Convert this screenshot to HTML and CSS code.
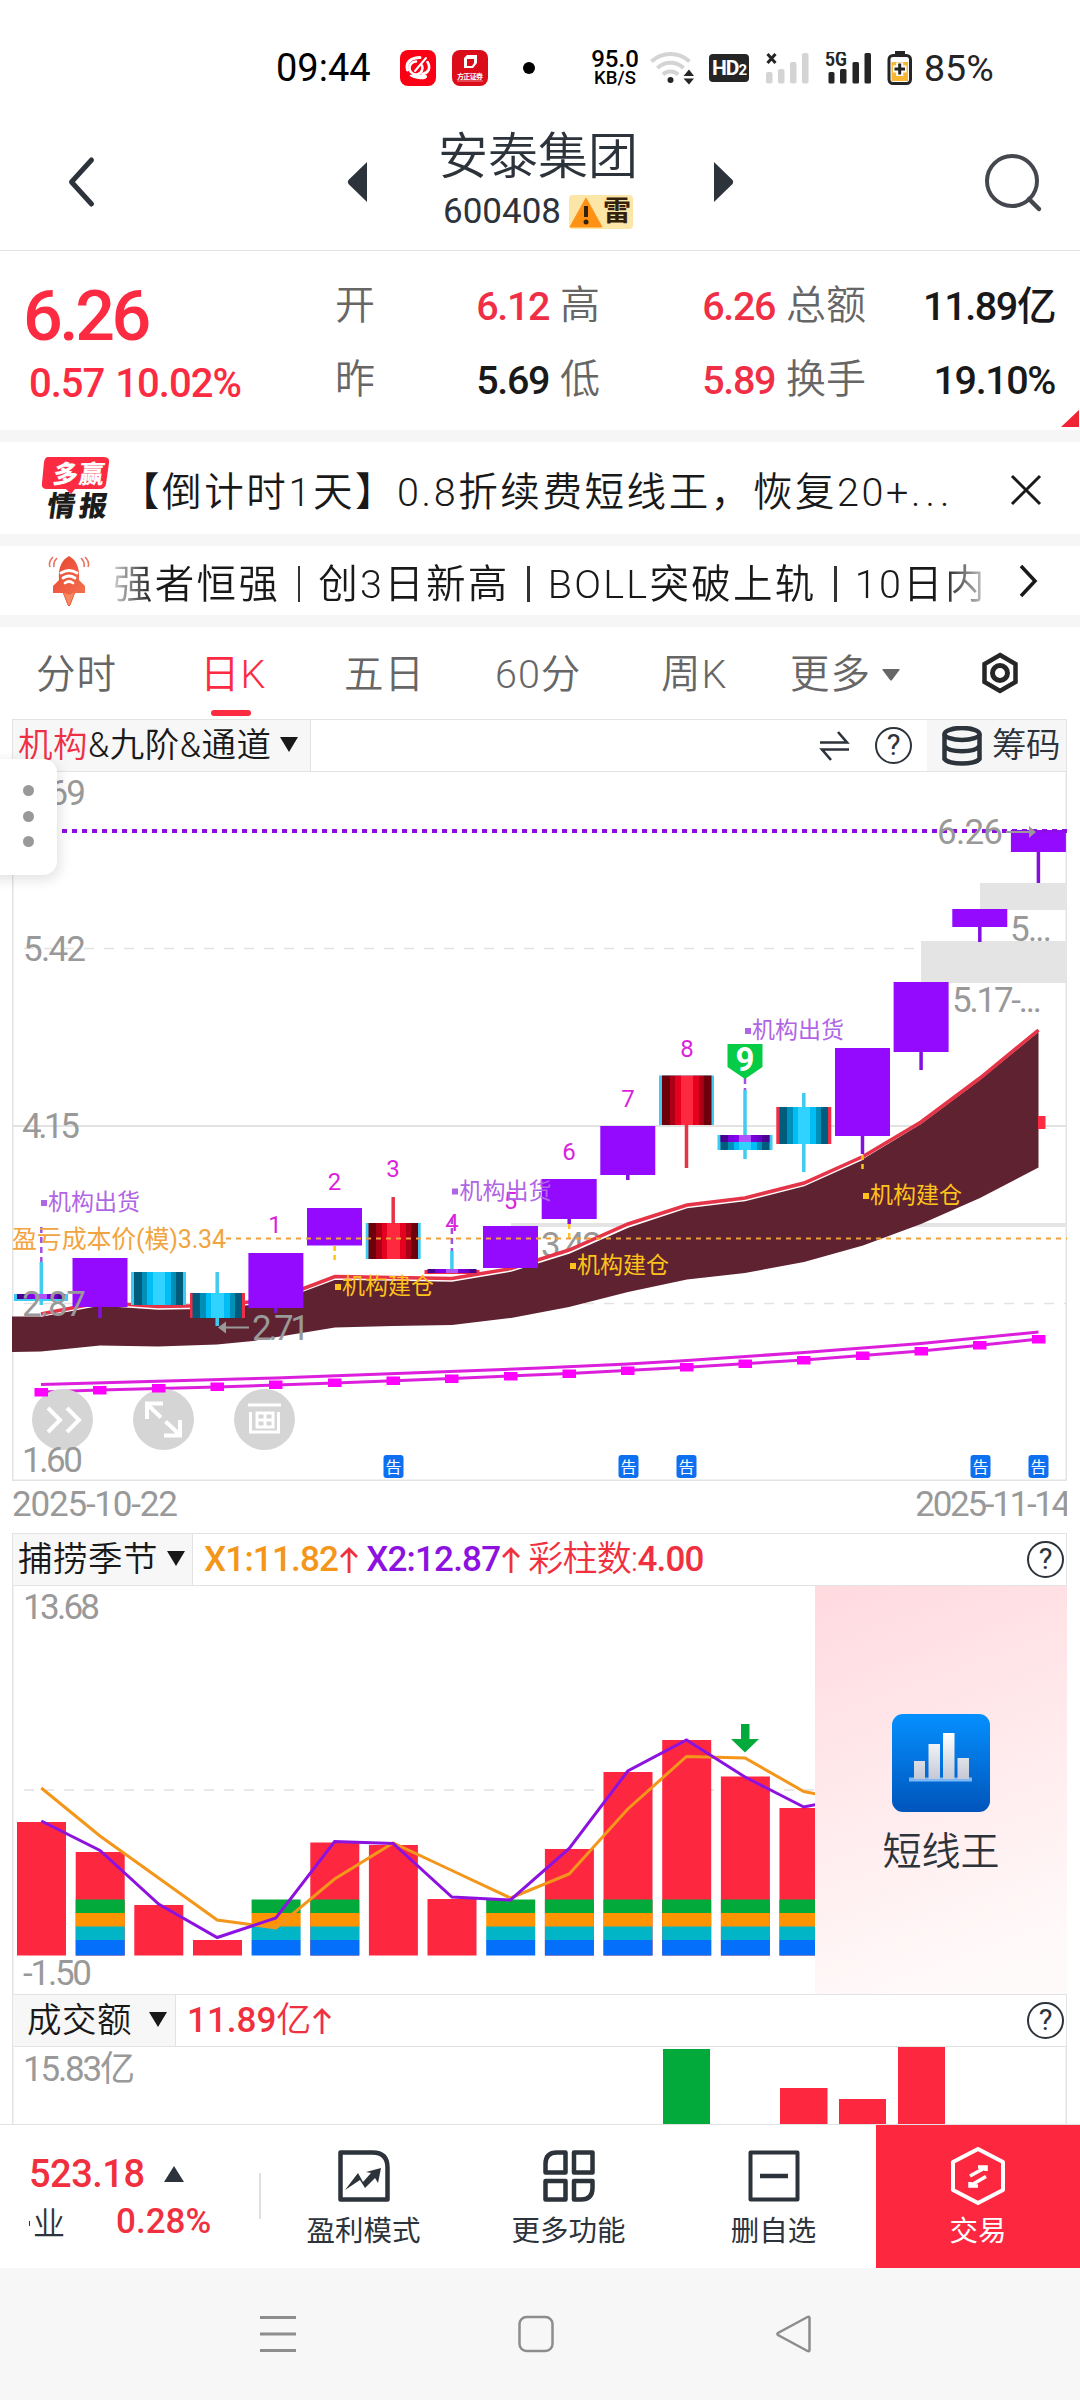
FILE: index.html
```html
<!DOCTYPE html>
<html lang="zh-CN">
<head>
<meta charset="utf-8">
<title>安泰集团 600408</title>
<link rel="stylesheet" href="styles.css">
</head>
<body>
<header class="status">
  <span class="clock">09:44</span>
  <svg class="app-a" width="36" height="36" viewBox="0 0 36 36"><rect width="36" height="36" rx="8" fill="#fb0015"/><g fill="none" stroke="#fff" stroke-linecap="round"><path d="M7.500 20C5 12 12 7.500 20 7.500" stroke-width="3"/><path d="M22 15.500a6.500 6.500 0 1 1-6-4" stroke-width="2.600"/><path d="M27.500 12c3.500 6 1 11-5 12" stroke-width="2.600"/><path d="M10 25.500c5 1 8 0 12-.5 7 0 5 4-2 3.500-5 0-7-1-10-3z" fill="#fff" stroke-width="1.500"/><path d="M15 21L26 8" stroke-width="2"/></g></svg>
  <svg class="app-b" width="36" height="36" viewBox="0 0 36 36"><rect width="36" height="36" rx="8" fill="#dc0d1b"/><path d="M12 8l3-3h10v8l-4 5h-9zM15 9v7h5l2-3V9z" fill="#fff" fill-rule="evenodd"/><text x="5" y="29" font-size="7" font-weight="700" fill="#fff" textLength="26">方正证券</text><path d="M5 31h26" stroke="#fff" stroke-width=".8" opacity=".6"/></svg>
  <i class="dot"></i>
  <span class="rate"><b>95.0</b><b class="unit">KB/S</b></span>
  <svg class="wifi" width="44" height="36" viewBox="0 0 44 36"><g fill="none" stroke="#d4d4d4" stroke-width="4"><path d="M1.500 11.500a28 28 0 0 1 38 0"/><path d="M7.500 18a19 19 0 0 1 26 0"/><path d="M13 24.500a11 11 0 0 1 15 0"/></g><circle cx="20.500" cy="30" r="3" fill="#252525"/><path d="M33.500 26l5.500-6.500 5 6.500zM33.500 28.500h10.500l-5 6z" fill="#252525"/></svg>
  <span class="hd">HD<small>2</small></span>
  <svg class="sig" width="44" height="32" viewBox="0 0 44 32"><path d="M1.500 2l8 9m0-9l-8 9" stroke="#252525" stroke-width="3"/><g fill="#d4d4d4"><rect y="20" width="6.500" height="11.500" rx="2"/><rect x="12" y="17" width="6.500" height="14.500" rx="2"/><rect x="24" y="10" width="6.500" height="21.500" rx="2"/><rect x="36" y="1" width="6.500" height="30.500" rx="2"/></g></svg>
  <svg class="sig2" width="47" height="32" viewBox="0 0 47 32"><text x="0" y="14" font-size="20" font-weight="700" fill="#252525" textLength="22" lengthAdjust="spacingAndGlyphs">5G</text><g fill="#252525"><rect x="3.500" y="20" width="6" height="11.500" rx="1.500"/><rect x="15" y="17" width="6.500" height="14.500" rx="1.500"/><rect x="27.500" y="10" width="6.500" height="21.500" rx="1.500"/><rect x="39.500" y="1" width="6.500" height="30.500" rx="1.500"/></g></svg>
  <svg class="batt" width="26" height="36" viewBox="0 0 26 36"><path d="M8 1h10v5H8z" fill="#252525"/><rect x="2" y="5.500" width="21.500" height="28" rx="4" fill="#fff" stroke="#252525" stroke-width="3"/><path d="M4.500 12h16.500v19H4.500z" fill="#f8b733"/><path d="M6 19h13.500M12.700 12.500v13.500" stroke="#fff" stroke-width="7"/><path d="M7.500 19h10.500M12.700 13.500v11" stroke="#252525" stroke-width="3"/></svg>
  <span class="pct">85%</span>
</header>

<section class="title">
  <svg class="back" width="30" height="52" viewBox="0 0 30 52"><path d="M25.500 4L5.500 26l20 22" fill="none" stroke="#2d333b" stroke-width="5" stroke-linecap="round" stroke-linejoin="round"/></svg>
  <svg class="prev" width="20" height="42" viewBox="0 0 20 42"><path d="M20 1v40L1.500 23q-1.500-2 0-4z" fill="#2d333b"/></svg>
  <div class="name"><h1>安泰集团</h1><p>600408 <span class="risk"><svg width="34" height="32" viewBox="0 0 34 32"><path d="M17 2L33 31H1z" fill="#ff9214" stroke="#ff9214" stroke-linejoin="round"/><path d="M17 10v11" stroke="#33210c" stroke-width="4"/><circle cx="17" cy="26" r="2.500" fill="#33210c"/></svg>雷</span></p></div>
  <svg class="next" width="20" height="42" viewBox="0 0 20 42"><path d="M0 1v40l18.500-18q1.500-2 0-4z" fill="#2d333b"/></svg>
  <svg class="search" width="60" height="62" viewBox="0 0 60 62"><circle cx="28" cy="29" r="25" fill="none" stroke="#45474f" stroke-width="4"/><path d="M45 47l10 10" stroke="#45474f" stroke-width="4.500" stroke-linecap="round"/></svg>
</section>

<section class="quote">
  <div class="last"><div class="price">6.26</div><div class="chg"><span>0.57</span><span>10.02%</span></div></div>
  <div class="stats">
    <span class="k">开</span><span class="v up">6.12</span><span class="k">高</span><span class="v up">6.26</span><span class="k">总额</span><span class="v">11.89亿</span>
    <span class="k">昨</span><span class="v">5.69</span><span class="k">低</span><span class="v up">5.89</span><span class="k">换手</span><span class="v">19.10%</span>
  </div>
  <i class="corner"></i>
</section>

<section class="promo">
  <svg width="72" height="64" viewBox="0 0 72 64"><path d="M9 1h56q6 0 5 6l-3 21q-1 5-6 5H36l-4 5-5-5H8q-6 0-5-6L5 6q1-5 4-5z" fill="#fc2b42"/><g font-weight="900"><text transform="translate(13 27) skewX(-8)" font-size="25" fill="#fff" textLength="51">多赢</text><text transform="translate(7 60) skewX(-8)" font-size="28" fill="#1c1c1c" textLength="60">情报</text></g></svg>
  <p>【倒计时1天】0.8折续费短线王，恢复20+<span>...</span></p>
  <svg class="close" width="32" height="32" viewBox="0 0 32 32"><path d="M2 2l28 28M30 2L2 30" stroke="#191919" stroke-width="3"/></svg>
</section>

<section class="ticker">
  <svg width="42" height="52" viewBox="0 0 42 52"><defs><linearGradient id="rk" x1="0" y1="0" x2="1" y2="1"><stop offset="0" stop-color="#e8452f"/><stop offset="1" stop-color="#f4704f"/></linearGradient></defs><path d="M15 37h12l-5 13q-1 2-2 0z" fill="#f58a62" stroke="#ea5b38"/><path d="M21 1c7 4 11 11 10 24l6 6v7H25q-4 3-8 0H5v-7l6-6C10 12 14 5 21 1z" fill="url(#rk)"/><g fill="none" stroke="#fff" stroke-width="2.800" stroke-linecap="round"><path d="M13 18q8-5 16 0M15 23q6-4 12 0M17 28q4-3 8 0"/></g><g fill="none" stroke="#e87561" stroke-width="1.600"><path d="M9 3Q5 7 6 12M5 2Q0 7 2 12M33 3q4 4 3 9M37 2q5 5 3 10"/></g></svg>
  <p>强者恒强<i></i>创3日新高<i></i>BOLL突破上轨<i></i>10日内</p>
  <svg width="20" height="34" viewBox="0 0 20 34"><path d="M2 2l14 15L2 32" fill="none" stroke="#191919" stroke-width="3.500"/></svg>
</section>

<nav class="tabs">
  <span>分时</span><span class="on">日K</span><span>五日</span><span>60分</span><span>周K</span><span class="more">更多<svg width="18" height="12" viewBox="0 0 18 12"><path d="M1 0h16q1 0 .5 1L10 11q-1 1-2 0L.5 1Q0 0 1 0z" fill="#666"/></svg></span>
  <svg class="hex" width="38" height="42" viewBox="0 0 38 42"><path d="M19 3l15.500 9v18L19 39 3.500 30V12z" fill="none" stroke="#262626" stroke-width="4.500"/><circle cx="19" cy="21" r="7.500" fill="none" stroke="#262626" stroke-width="5"/></svg>
</nav>

<main class="charts">
  <div class="head">
    <span class="sel"><em>机构</em>&amp;九阶&amp;通道<i class="tri"></i></span>
    <svg class="swap" width="34" height="34" viewBox="0 0 34 34"><path d="M2 13.500h27L20 3M31 20.500H4L13 31" fill="none" stroke="#2d333b" stroke-width="2.600"/></svg>
    <span class="help">?</span>
    <span class="chip"><svg width="40" height="40" viewBox="0 0 40 40"><g fill="none" stroke="#2d333b" stroke-width="4.500"><ellipse cx="20" cy="8" rx="17.500" ry="6"/><path d="M2.500 8v25c5 6 30 6 35 0V8M2.500 20c5 7 30 7 35 0"/></g></svg>筹码</span>
  </div>

  <svg class="kline" width="1055" height="709" viewBox="12 772 1055 709">
    <defs>
      <linearGradient id="cy"><stop offset=".05" stop-color="#005c7d"/><stop offset=".16" stop-color="#005c7d"/><stop offset=".16" stop-color="#008fb8"/><stop offset=".27" stop-color="#008fb8"/><stop offset=".27" stop-color="#00bdf5"/><stop offset=".38" stop-color="#00bdf5"/><stop offset=".38" stop-color="#30d2ff"/><stop offset=".63" stop-color="#30d2ff"/><stop offset=".63" stop-color="#00bdf5"/><stop offset=".75" stop-color="#00bdf5"/><stop offset=".75" stop-color="#008fb8"/><stop offset=".85" stop-color="#008fb8"/><stop offset=".85" stop-color="#005c7d"/></linearGradient>
      <linearGradient id="rd"><stop offset=".16" stop-color="#6e000c"/><stop offset=".16" stop-color="#aa0016"/><stop offset=".27" stop-color="#aa0016"/><stop offset=".27" stop-color="#e4001e"/><stop offset=".38" stop-color="#e4001e"/><stop offset=".38" stop-color="#ff293f"/><stop offset=".63" stop-color="#ff293f"/><stop offset=".63" stop-color="#e4001e"/><stop offset=".75" stop-color="#e4001e"/><stop offset=".75" stop-color="#aa0016"/><stop offset=".85" stop-color="#aa0016"/><stop offset=".85" stop-color="#6e000c"/></linearGradient>
      <linearGradient id="pu"><stop offset=".16" stop-color="#4a0090"/><stop offset=".16" stop-color="#7300d6"/><stop offset=".38" stop-color="#8b00f5"/><stop offset=".38" stop-color="#b053ff"/><stop offset=".63" stop-color="#b053ff"/><stop offset=".63" stop-color="#7e00e2"/><stop offset=".85" stop-color="#6500c0"/><stop offset=".85" stop-color="#4a0090"/></linearGradient>
    </defs>
    <path d="M12.700 772V1480.300H1066.300V772" fill="none" stroke="#e3e3e3" stroke-width="1.500"/>
    <g stroke="#e2e2e2" fill="none"><path d="M24 948.500H920" stroke-width="1.500" stroke-dasharray="10 10"/><path d="M12 1126H1067" stroke-width="2"/><path d="M24 1303.500H1067" stroke-width="1.500" stroke-dasharray="10 10"/></g>
    <g fill="#e4e4e4"><path d="M980 883h87v27h-87zM921 941h146v42H921zM511 1223h556v4H511z"/></g>
    <g class="axis"><text x="541" y="1257" textLength="61">3.42</text></g>
    <path fill="#5e2231" d="M12 1316.500H41L100 1305 158 1309 217 1308 276 1301 335 1279 393 1280 452 1281 511 1271 569 1253 628 1227 687 1207 745 1200 804 1185 863 1159 921 1124 980 1080 1038.500 1032V1167.500L980 1198 921 1224 863 1245.500 804 1262 745 1273 687 1279.500 628 1292 569 1307 511 1318 452 1325 393 1326 335 1327.500 253 1341 217 1344.500 158 1346.500 100 1345.500 41 1351.500 12 1352z"/>
    <path fill="none" stroke="#fff" stroke-width="1.500" d="M41 1316L100 1305 158 1309 217 1308 276 1301 335 1279 393 1280 452 1281 511 1271 569 1253 628 1227 687 1207.500 745 1200.500 804 1185.500 863 1159"/>
    <path fill="none" stroke="#e53347" stroke-width="3.500" d="M41 1314L100 1302.500 158 1306.500 217 1305.500 276 1299 335 1276.500 393 1277.500 452 1278.500 511 1268.500 569 1250 628 1224 687 1205 745 1198 804 1183 863 1156.500 921 1122 980 1078 1038.500 1030"/>
    <path d="M1038 1116h7.500v13h-7.500z" fill="#fc2b42"/>
    <g stroke-width="3.500" fill="none">
      <path stroke="#a34fe0" stroke-width="2.500" stroke-dasharray="6 4" d="M41.300 1227v35M451.900 1218v33M745 1078v12"/>
      <path stroke="#3fcbf2" d="M41.300 1262v43M217.200 1272v54M451.900 1251v18M745 1090v69M803.800 1093v79"/>
      <path stroke="#8410e0" d="M100 1307v11M275.900 1308v5M569.200 1219v5M627.800 1175v5M862.500 1136v18M921.100 1052v18M979.800 927v15M1038.400 852v31"/>
      <path stroke="#e53347" d="M393.200 1197v27M686.500 1125v43"/>
      <path stroke="#ffc21a" stroke-width="2.500" stroke-dasharray="5 4" d="M334.600 1246v14M569.200 1224v15M862.500 1155v15"/>
    </g>
    <path fill="#930aff" d="M72.500 1258h55v49h-55zM248.400 1253h55v55h-55zM307 1208h55v37.500h-55zM483 1226h55v42h-55zM541.700 1179h55v40h-55zM600.300 1126h55v49h-55zM835 1048h55v88h-55zM893.600 982h55v70h-55zM952.300 909h55v18h-55zM1010.900 830h55v22h-55z"/>
    <g fill="#3fcbf2"><path d="M14 1294h54v7H14zM131 1272h55v33h-55zM365.700 1223h55v36h-55zM659 1075.500h55v49.500h-55zM717.500 1135h55v15h-55z"/></g>
    <g fill="#f02f46"><path d="M190 1293h55v25h-55zM424.500 1270h55v4h-55zM776.300 1107h55v37h-55z"/></g>
    <g fill="url(#cy)"><rect x="134" y="1272" width="49" height="33"/><rect x="192.500" y="1293" width="49.500" height="25"/><rect x="720.500" y="1135" width="49" height="15"/><rect x="779.500" y="1107" width="48.500" height="37"/></g>
    <g fill="url(#rd)"><rect x="368.500" y="1223" width="49.500" height="36"/><rect x="662" y="1075.500" width="49.500" height="49.500"/></g>
    <g fill="url(#pu)"><rect x="17" y="1294" width="48" height="5"/><rect x="427.500" y="1269" width="49" height="4"/><rect x="720.500" y="1135" width="49" height="7"/></g>
    <path stroke="#8b10e0" stroke-width="4" stroke-dasharray="5 5" d="M12 831H1067"/>
    <path stroke="#eea03c" stroke-width="2" stroke-dasharray="5 5" d="M226 1238.600H1067"/>
    <g fill="none" stroke="#dc1fdc" stroke-width="3"><path d="M41 1384.500L276 1378 540 1368 628 1364 687 1360.500 804 1352.500 921 1343.500 1038.500 1332"/><path d="M41 1392L100 1390 217 1387 335 1383 452 1378.500 569 1373.500 687 1367.300 804 1360 921 1351 980 1345.300 1038.500 1339"/></g>
    <g fill="#d5d5d5"><circle cx="62.500" cy="1419.500" r="30.500"/><circle cx="163.500" cy="1419.500" r="30.500"/><circle cx="264.500" cy="1419.500" r="30.500"/></g>
    <path fill="#ff00ff" d="M34.500 1388h13.500v8.500H34.500zM93 1386h13.500v8.500H93zM152 1384h13.500v8.500H152zM210.500 1382.500h13.500v8.500h-13.500zM269 1380.500h13.500v8.500h-13.500zM328 1378.500h13.500v8.500H328zM386.500 1376.500h13.500v8.500h-13.500zM445 1374.500h13.500v8.500H445zM504 1372h13.500v8.500H504zM562.500 1369.500h13.500v8.500h-13.500zM621 1366.500h13.500v8.500H621zM680 1363h13.500v8.500H680zM738.500 1359.500h13.500v8.500h-13.500zM797 1356h13.500v8.500H797zM856 1351.500h13.500v8.500H856zM914.500 1347h13.500v8.500h-13.500zM973 1341h13.500v8.500H973zM1032 1335h13.500v8.500H1032z"/>
    <g fill="none" stroke="#fff" stroke-width="4"><path d="M48 1408l12 12-12 12M67 1408l12 12-12 12"/><path d="M147 1419v-15.500h16M148 1405l13 12.500M180 1420v15.500h-16M179 1434l-13.500-12.500"/><path d="M248 1405h33M250.500 1412v21M278.500 1412v21M249 1432h31M257 1413h16v14h-16zM265 1413v14M257 1420h16" stroke-width="3"/></g>
    <g class="axis">
      <text x="23" y="805" textLength="63">6.69</text><text x="23" y="961" textLength="63">5.42</text><text x="22" y="1138" textLength="58">4.15</text><text x="22" y="1316" textLength="64">2.87</text><text x="22" y="1472" textLength="61">1.60</text>
      <text x="937" y="844" textLength="66">6.26</text><text x="1010" y="941" textLength="42">5...</text><text x="952" y="1012" textLength="90">5.17-...</text><text x="252" y="1340" textLength="58">2.71</text>
    </g>
    <path d="M1006 832h26M249 1327.500h-28" stroke="#999" stroke-width="2"/><path d="M1036 832l-7-6v12zM218 1327.500l8-6v12z" fill="#999"/>
    <g class="cnt"><text x="275" y="1233">1</text><text x="334.500" y="1190">2</text><text x="393" y="1177">3</text><text x="452" y="1231">4</text><text x="510.500" y="1209">5</text><text x="569" y="1160">6</text><text x="628" y="1107">7</text><text x="687" y="1057">8</text></g>
    <g class="out"><path d="M41 1200h6v6h-6zM452 1188.500h6v6h-6zM745 1028h6v6h-6z"/><text x="48" y="1210">机构出货</text><text x="459.500" y="1199">机构出货</text><text x="752" y="1038">机构出货</text></g>
    <g class="in"><path d="M335 1284h6v6h-6zM570 1263h6v6h-6zM863 1193h6v6h-6z"/><text x="342" y="1294">机构建仓</text><text x="577" y="1273">机构建仓</text><text x="870" y="1203">机构建仓</text></g>
    <text x="12" y="1248" class="cost" textLength="214">盈亏成本价(模)3.34</text>
    <path d="M727.500 1044h35v23L745 1079l-17.500-12z" fill="#05cb45"/><text x="745" y="1071" font-size="33" font-weight="700" fill="#fff" text-anchor="middle">9</text>
    <g fill="#0e70f1"><rect x="383.500" y="1455" width="20" height="23" rx="3"/><rect x="618.500" y="1455" width="20" height="23" rx="3"/><rect x="676.500" y="1455" width="20" height="23" rx="3"/><rect x="970.500" y="1455" width="20" height="23" rx="3"/><rect x="1028.500" y="1455" width="20" height="23" rx="3"/></g>
    <g class="note"><text x="393.500" y="1472.500">告</text><text x="628.500" y="1472.500">告</text><text x="686.500" y="1472.500">告</text><text x="980.500" y="1472.500">告</text><text x="1038.500" y="1472.500">告</text></g>
  </svg>
  <div class="dates"><span>2025-10-22</span><span class="to">2025-11-14</span></div>

  <div class="head">
    <span class="sel two">捕捞季节<i class="tri"></i></span>
    <span class="vals"><b class="or">X1:11.82</b><svg class="arr" width="18" height="26" viewBox="0 0 18 26"><path d="M9 26V2M1 10l8-8 8 8" fill="none" stroke="#f0303f" stroke-width="2.800"/></svg><b class="pp">X2:12.87</b><svg class="arr" width="18" height="26" viewBox="0 0 18 26"><path d="M9 26V2M1 10l8-8 8 8" fill="none" stroke="#f0303f" stroke-width="2.800"/></svg><b class="rr"><s>彩柱数:</s>4.00</b></span>
    <span class="help">?</span>
  </div>
  <div class="season">
    <svg width="803" height="408" viewBox="12 1586 803 408">
      <path d="M12.700 1586v408" stroke="#e3e3e3" stroke-width="1.500"/>
      <path stroke="#e8e8e8" stroke-width="2" stroke-dasharray="10 10" d="M24 1790H815"/>
      <path fill="#fd2840" d="M17 1822h49v133.500H17zM75.700 1852h49v103.500h-49zM134.300 1905h49v50.500h-49zM193 1940h49v15.500h-49zM310.300 1842.500h49v113h-49zM368.900 1845h49v110.500h-49zM427.500 1899h49v56.500h-49zM544.900 1849h49v106.500h-49zM603.500 1772h49v183.500h-49zM662.200 1740h49v215.500h-49zM720.900 1776.500h49v179h-49zM779.500 1808h49v147.500h-49z"/>
      <path fill="#02aa3c" d="M75.700 1899.500h49v14h-49zM251.600 1899.500h49v14h-49zM310.300 1899.500h49v14h-49zM486.200 1899.500h49v14h-49zM544.900 1899.500h49v14h-49zM603.500 1899.500h49v14h-49zM662.200 1899.500h49v14h-49zM720.900 1899.500h49v14h-49zM779.500 1899.500h49v14h-49z"/>
      <path fill="#ff9300" d="M75.700 1913h49v14h-49zM251.600 1913h49v14h-49zM310.300 1913h49v14h-49zM486.200 1913h49v14h-49zM544.900 1913h49v14h-49zM603.500 1913h49v14h-49zM662.200 1913h49v14h-49zM720.900 1913h49v14h-49zM779.500 1913h49v14h-49z"/>
      <path fill="#02b5c6" d="M75.700 1926.500h49v14h-49zM251.600 1926.500h49v14h-49zM310.300 1926.500h49v14h-49zM486.200 1926.500h49v14h-49zM544.900 1926.500h49v14h-49zM603.500 1926.500h49v14h-49zM662.200 1926.500h49v14h-49zM720.900 1926.500h49v14h-49zM779.500 1926.500h49v14h-49z"/>
      <path fill="#046ffb" d="M75.700 1940h49v15.500h-49zM251.600 1940h49v15.500h-49zM310.300 1940h49v15.500h-49zM486.200 1940h49v15.500h-49zM544.900 1940h49v15.500h-49zM603.500 1940h49v15.500h-49zM662.200 1940h49v15.500h-49zM720.900 1940h49v15.500h-49zM779.500 1940h49v15.500h-49z"/>
      <g fill="none" stroke-width="3"><path stroke="#f3961a" d="M41.300 1788L100 1836 158.600 1878 217.200 1920 275.900 1928 334.600 1879 393.200 1843 451.900 1870.500 510.500 1898 569.200 1874 627.800 1809 686.500 1756.500 745 1758 803.800 1791.500 816 1794"/><path stroke="#8d12e0" d="M41.300 1821L100 1850.500 158.600 1904 217.200 1937.500 275.900 1918 334.600 1841.500 393.200 1843.500 451.900 1897 510.500 1900 569.200 1848.500 627.800 1771 686.500 1740 745 1777 803.800 1807 816 1804.500"/></g>
      <path fill="#02aa3c" d="M741 1724h8.500v15h9.500l-14 13.500L731 1739h10z"/>
      <g class="axis"><text x="23" y="1619" textLength="77">13.68</text><text x="23" y="1985" textLength="69">-1.50</text></g>
    </svg>
    <aside>
      <svg width="98" height="98" viewBox="0 0 98 98"><defs><linearGradient id="bl" x2="0" y2="1"><stop offset="0" stop-color="#0590ff"/><stop offset="1" stop-color="#0055bb"/></linearGradient><linearGradient id="wh" x2="0" y2="1"><stop offset="0" stop-color="#fff"/><stop offset="1" stop-color="#c5c9d6"/></linearGradient></defs><rect width="98" height="98" rx="11" fill="url(#bl)"/><path d="M17 63.500h63v4H17z" fill="#7fb9f5"/><path d="M22 47h11v18H22zM36.500 30h11.500v35H36.500zM51 19h11.500v46H51zM65.500 44H77v21H65.500z" fill="url(#wh)"/></svg>
      <span>短线王</span>
    </aside>
  </div>

  <div class="head">
    <span class="sel three">成交额<i class="tri"></i></span>
    <span class="vals"><b class="rr amt">11.89<s>亿</s></b><svg class="arr" width="18" height="26" viewBox="0 0 18 26"><path d="M9 26V2M1 10l8-8 8 8" fill="none" stroke="#f0303f" stroke-width="2.800"/></svg></span>
    <span class="help">?</span>
  </div>
  <svg class="vol" width="1055" height="77" viewBox="12 2047 1055 77"><path d="M12.700 2047v78M1066.300 2047v78" stroke="#e3e3e3" stroke-width="1.500"/><path fill="#02aa3c" d="M663 2049h47v76h-47z"/><path fill="#fd2840" d="M780 2088h47.500v37H780zM839 2099h47v26h-47zM898 2047h47v78h-47z"/><g class="axis"><text x="23" y="2081" textLength="112">15.83亿</text></g></svg>
</main>

<footer class="bar">
  <div class="index"><div class="i1">523.18<svg width="20" height="16" viewBox="0 0 20 16"><path d="M10 0l10 16H0z" fill="#2d333b"/></svg></div><div class="i2"><span class="dotcut">业</span><b>0.28%</b></div></div>
  <i class="div"></i>
  <div class="act"><svg width="52" height="52" viewBox="0 0 52 52"><path d="M2.500 2.500h32q15 0 15 15v32h-47z" fill="none" stroke="#2d333b" stroke-width="4.500" stroke-linejoin="round"/><path d="M7 40l13-17 5 9 8-9-5-1 15-4-3 15-3-5-10 10-5-8z" fill="#2d333b"/></svg><span>盈利模式</span></div>
  <div class="act"><svg width="52" height="52" viewBox="0 0 52 52"><g fill="none" stroke="#2d333b" stroke-width="4.500" stroke-linejoin="round"><path d="M14 2.500h8.500v20h-20V14q0-11.500 11.500-11.500zM31 2.500h18.500v20H31zM2.500 31h20v18.500h-20zM31 31h18.500v7q0 11.500-11.500 11.500h-7z"/></g></svg><span>更多功能</span></div>
  <div class="act"><svg width="52" height="52" viewBox="0 0 52 52"><rect x="2.500" y="2.500" width="47" height="47" fill="none" stroke="#2d333b" stroke-width="4" stroke-linejoin="round"/><path d="M12 26h28" stroke="#2d333b" stroke-width="4.500"/></svg><span>删自选</span></div>
  <div class="act trade"><svg width="56" height="60" viewBox="0 0 56 60"><path d="M28 3l25 13v28L28 57 3 44V16z" fill="none" stroke="#fff" stroke-width="4" stroke-linejoin="round"/><path d="M20 30L35.500 21.500M28 21h8v4M36 30.500L20.500 39.500M28 40h-8v-4" fill="none" stroke="#fff" stroke-width="3.500"/></svg><span>交易</span></div>
</footer>

<nav class="sys">
  <svg width="36" height="38" viewBox="0 0 36 38"><path d="M0 2.500h36M0 19h36M0 35.500h36" stroke="#8d8d8d" stroke-width="3"/></svg>
  <svg width="36" height="38" viewBox="0 0 36 38"><rect x="1.500" y="2" width="33" height="34" rx="7" fill="none" stroke="#8d8d8d" stroke-width="2.500"/></svg>
  <svg width="36" height="38" viewBox="0 0 36 38"><path d="M33.500 3v32q0 2-2 1L2 20q-1-1 0-2L31.500 2q2-1 2 1z" fill="none" stroke="#8d8d8d" stroke-width="2.500"/></svg>
</nav>

<div class="drawer"><i></i><i></i><i></i></div>
</body>
</html>
```
FILE: styles.css
```css
* { box-sizing: border-box; margin: 0; padding: 0; }
body { width: 1080px; height: 2400px; overflow: hidden; position: relative; background: #fff; color: #191919; font-family: Roboto, "Noto Sans CJK SC", sans-serif; display: flex; flex-direction: column; }
svg { display: block; flex: none; }
svg text { font-family: Roboto, "Noto Sans CJK SC", sans-serif; }
i, em { font-style: normal; }
span, b, p { white-space: nowrap; }

.status { height: 118px; padding: 18px 0 0 276px; display: flex; align-items: center; flex: none; }
.clock { width: 124px; font-size: 38px; color: #000; }
.app-b { margin-left: 16px; }
.dot { width: 12px; height: 12px; border-radius: 50%; background: #000; margin-left: 35px; }
.rate { width: 50px; margin-left: 55px; display: flex; flex-direction: column; align-items: center; color: #000; font-size: 24px; line-height: 20px; gap: 1px; }
.rate b { font-weight: 500; }
.rate .unit { font-size: 18.500px; line-height: 17px; }
.wifi { margin-left: 10px; }
.hd { width: 40px; height: 28px; margin-left: 15px; border-radius: 4px; background: #252525; color: #fff; font-size: 21px; font-weight: 700; line-height: 29px; text-align: center; letter-spacing: -1px; }
.hd small { font-size: 15px; }
.sig { margin-left: 17px; }
.sig2 { margin-left: 15px; }
.batt { margin-left: 15px; }
.pct { margin-left: 11px; font-size: 37.500px; color: #252525; }

.title { height: 133px; border-bottom: 1.500px solid #e3e3e3; display: grid; grid-template-columns: 281px 20px 347px 269px 60px; padding-left: 66px; align-items: center; flex: none; }
.back, .prev, .next { margin-top: -4px; }
.search { margin-top: -2px; margin-left: 1px; }
.name { display: flex; flex-direction: column; align-items: center; color: #2d333b; padding-right: 5px; margin-top: -9px; }
.name h1 { font-weight: 350; font-size: 50px; line-height: 62px; }
.name p { font-size: 35px; line-height: 42px; display: flex; align-items: center; gap: 8px; margin-top: 3px; }
.risk { display: flex; width: 64px; height: 34px; background: #fbe6a8; border-radius: 4px; align-items: center; font-size: 28px; font-weight: 700; color: #33210c; }

.quote { height: 179px; position: relative; display: flex; padding: 25px 25px 0 25px; flex: none; }
.last { width: 310px; color: #fc2b42; font-weight: 500; }
.price { font-size: 70px; line-height: 78px; letter-spacing: -3.500px; margin-left: -2px; padding-top: 1px; }
.chg { font-size: 40px; line-height: 50px; margin-left: 4px; margin-top: 4px; display: flex; gap: 11px; letter-spacing: -1px; }
.stats { display: grid; flex: 1; grid-template-columns: 38px 176px 51px 175px 91px 189px; grid-auto-rows: 74px; line-height: 60px; font-size: 39.500px; }
.k { font-weight: 350; color: #666; font-size: 40px; text-align: right; }
.v { text-align: right; font-weight: 500; letter-spacing: -1.400px; padding-top: 1px; }
.up { color: #f02f46; }
.corner { position: absolute; right: 1px; bottom: 3px; border-left: 18px solid transparent; border-bottom: 17px solid #f02433; }

.promo, .ticker { border-top: 12px solid #f6f6f6; display: flex; align-items: center; flex: none; font-size: 39.500px; font-weight: 350; }
.promo { height: 104px; padding-left: 39px; }
.promo p { width: 860px; margin-left: 9px; margin-right: 30px; letter-spacing: 2.600px; }
.promo p span { letter-spacing: 5px; }
.close { margin-top: 4px; }
.ticker { height: 81px; padding-left: 48px; }
.ticker p { width: 868px; margin: 0 38px 0 23px; overflow: hidden; letter-spacing: 2.300px; -webkit-mask-image: linear-gradient(90deg, rgba(0,0,0,.2), #000 40px, #000 830px, rgba(0,0,0,.3)); }
.ticker p i { display: inline-block; width: 2.500px; height: 36px; background: #333; margin: 0 18px 0 17.500px; vertical-align: -4px; }

.tabs { height: 104px; border-top: 12px solid #f6f6f6; display: grid; grid-template-columns: 164px 144px 151px 166px 129px 191px 38px; padding-left: 36px; font-size: 39.500px; font-weight: 350; color: #666; letter-spacing: 1px; line-height: 96px; flex: none; }
.on { color: #fc2b42; position: relative; }
.on::after { content: ""; position: absolute; left: 11px; top: 83px; width: 40px; height: 6px; border-radius: 3px; background: #fc2b42; }
.more { display: flex; align-items: center; gap: 11px; }
.hex { margin-top: 25px; }

.charts { margin: 0 13px 0 12px; flex: none; height: 1405px; display: flex; flex-direction: column; overflow: hidden; }
.head { height: 53px; border: 1.500px solid #e3e3e3; display: flex; align-items: stretch; font-size: 34.500px; line-height: 51px; flex: none; }
.sel { width: 298px; background: #f7f7f7; border-right: 1px solid #e3e3e3; padding-left: 5px; display: flex; align-items: center; font-weight: 350; letter-spacing: .500px; }
.sel em { color: #f02f46; }
.two { width: 180px; }
.three { width: 163px; padding-left: 14px; }
.tri { width: 0; border: 9.500px solid transparent; border-top: 15px solid #191919; border-bottom: 0; margin-left: 9px; margin-top: -3px; }
.three .tri { margin-left: 17px; }
.swap { margin: 9px 0 0 507px; }
.help { width: 37px; height: 37px; border: 2.500px solid #2d333b; border-radius: 50%; font-size: 29px; line-height: 32px; text-align: center; color: #2d333b; margin: 7px 0 0 23px; }
.vals ~ .help { margin-left: auto; margin-right: 2px; }
.chip { width: 139px; background: #f6f6f6; margin-left: auto; padding-left: 15px; display: flex; align-items: center; gap: 10px; font-weight: 350; color: #2d333b; letter-spacing: -.500px; }
.axis { font-size: 35px; fill: #999; }
.cnt { font-size: 24px; fill: #dc1fdc; text-anchor: middle; }
.out, .in { font-size: 23px; }
.out { fill: #b065e4; }
.in { fill: #ffc21a; }
.cost { font-size: 25px; fill: #f2a440; }
.note { font-size: 16px; fill: #fff; text-anchor: middle; }
.dates { height: 52px; display: flex; justify-content: space-between; font-size: 35px; line-height: 47px; color: #999; letter-spacing: -1.200px; flex: none; }
.to { letter-spacing: -2.300px; margin-right: -2px; }
.vals { display: flex; align-items: center; padding-left: 11px; font-size: 35px; }
.vals b { font-weight: 500; letter-spacing: -.800px; }
.vals s { text-decoration: none; font-weight: 350; }
.vals .amt { letter-spacing: 0; }
.arr { margin: 0 8px 0 2px; }
.or { color: #f3961a; }
.pp { color: #8d12e0; }
.rr { color: #f0303f; }
.season { display: flex; height: 408px; flex: none; }
aside { flex: 1; background: linear-gradient(160deg, #ffdadf, #fffafa 90%); display: flex; flex-direction: column; align-items: center; padding-top: 128px; font-size: 39px; font-weight: 350; color: #2d333b; line-height: 80px; }

.bar { height: 144px; border-top: 1px solid #e3e3e3; display: flex; flex: none; background: #fff; }
.index { width: 259px; padding: 26px 0 0 29px; color: #f0303f; font-weight: 500; }
.i1 { font-size: 38px; line-height: 46px; display: flex; align-items: center; gap: 19px; letter-spacing: -.500px; }
.i2 { font-size: 35px; line-height: 50px; display: flex; gap: 51px; }
.dotcut { color: #2d333b; font-weight: 350; font-size: 32px; padding-left: 4px; line-height: 54px; background: linear-gradient(#2d333b, #2d333b) 0 24px / 1px 5px no-repeat; }
.i2 b { font-weight: 500; }
.div { width: 2px; height: 46px; margin: 48px 0 0; background: #e0e0e0; }
.act { width: 205px; display: flex; flex-direction: column; align-items: center; padding-top: 25px; font-size: 28.500px; line-height: 40px; color: #2d333b; gap: 14px; }
.act span { margin-top: -4px; }
.trade { background: #fd2840; color: #fff; flex: 1; padding-top: 21px; gap: 10px; }
.sys { height: 132px; background: #f7f7f7; display: flex; justify-content: space-between; padding: 47px 268px 0 260px; flex: none; }

.drawer { position: absolute; left: -20px; top: 759px; width: 77px; height: 116px; border-radius: 14px; background: #fff; box-shadow: 2px 4px 14px rgba(0,0,0,.13); display: flex; flex-direction: column; align-items: center; justify-content: center; gap: 14.500px; padding-left: 20px; padding-bottom: 2px; }
.drawer i { width: 11px; height: 11px; border-radius: 50%; background: #999; }
```
